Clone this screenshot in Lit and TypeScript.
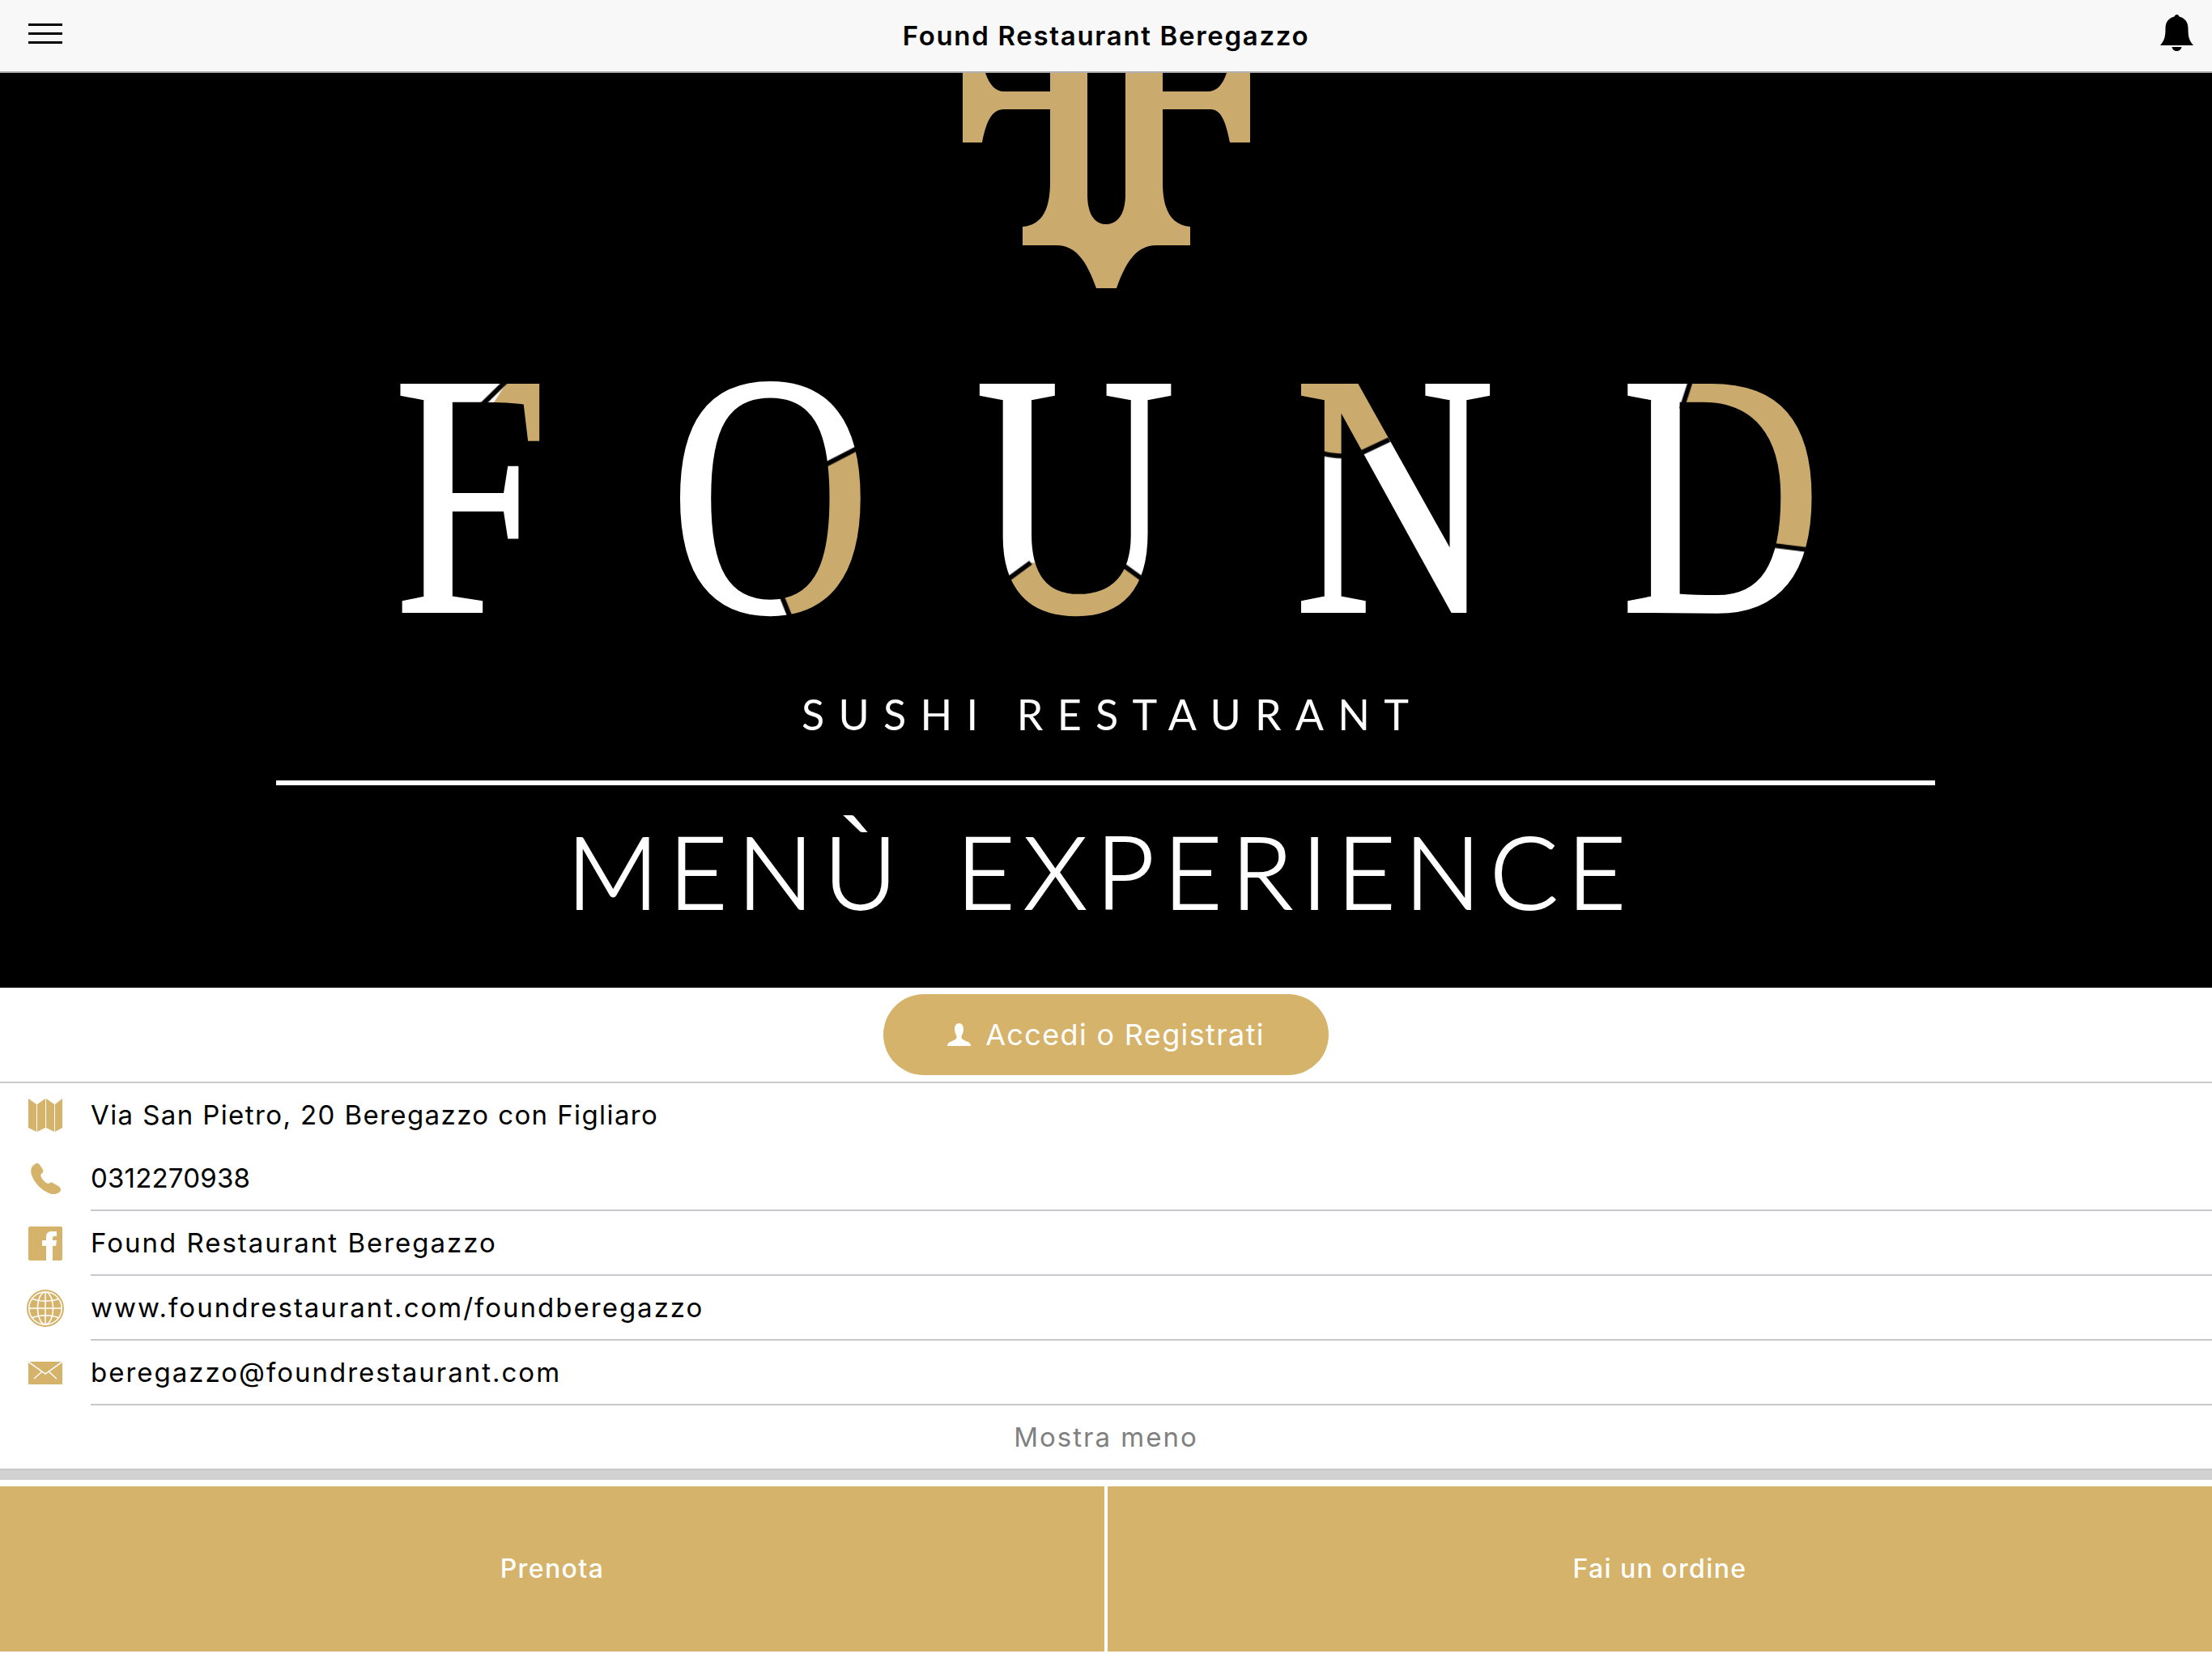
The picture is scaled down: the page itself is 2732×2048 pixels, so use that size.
import { LitElement, html, css } from 'lit';
import { customElement } from 'lit/decorators.js';

const rows = [
  {
    text: 'Via San Pietro, 20 Beregazzo con Figliaro',
    plain: true,
    spacing: 1.4,
    icon: html`<svg class="ic" width="42" height="41" viewBox="0 0 42 41"><path d="M0 0L10 7V41L0 36ZM11 7L21 0V36L11 41ZM22 0L32 7V41L22 36ZM33 7L42 0V36L33 41Z"/></svg>`,
  },
  {
    text: '0312270938',
    spacing: 0.2,
    icon: html`<svg class="ic" width="38" height="38" viewBox="0 0 38 38"><path d="M6 1C9-1 11 0 13 3L16 8C17 10 16 12 14 13C13 14 13 16 15 19C18 23 21 25 23 25C25 24 26 23 28 24L35 28C38 30 39 33 37 35C34 38 29 39 24 37C14 33 5 24 2 14C0 8 2 3 6 1Z"/></svg>`,
  },
  {
    text: 'Found Restaurant Beregazzo',
    spacing: 2,
    icon: html`<svg class="ic" width="42" height="42" viewBox="0 0 42 42"><path d="M2 0H40Q42 0 42 2V40Q42 42 40 42H30V24H34L35 17H30V14Q30 12 32 12H35V6H29Q22 6 22 13V17H17V24H22V42H2Q0 42 0 40V2Q0 0 2 0Z"/></svg>`,
  },
  {
    text: 'www.foundrestaurant.com/foundberegazzo',
    spacing: 2,
    icon: html`<svg width="46" height="46" viewBox="0 0 46 46">
      <circle cx="23" cy="23" r="22" fill="none" stroke="#d6b36a" stroke-width="2"/>
      <circle cx="23" cy="23" r="19.5" fill="#d6b36a"/>
      <g fill="none" stroke="#fff" stroke-width="1.6">
        <ellipse cx="23" cy="23" rx="9.5" ry="20"/>
        <path d="M23 3V43M3 23H43M6.5 11.5Q23 17 39.5 11.5M6.5 34.5Q23 29 39.5 34.5"/>
      </g>
    </svg>`,
  },
  {
    text: 'beregazzo@foundrestaurant.com',
    spacing: 2,
    icon: html`<svg width="42" height="28" viewBox="0 0 42 28">
      <rect width="42" height="28" fill="#d6b36a"/>
      <path d="M0 0L21 15L42 0M7 21L17 12M35 21L25 12" fill="none" stroke="#fff" stroke-width="1.5"/>
    </svg>`,
  },
];

@customElement('app-root')
export class AppRoot extends LitElement {
  static styles = css`
    :host {
      display: block;
      width: 2732px;
      height: 2048px;
      background: #fff;
      font-family: 'Inter', 'Liberation Sans', sans-serif;
      color: #000;
    }
    .bar {
      height: 88px;
      background: #f8f8f8;
      border-bottom: 2px solid #b2b2b2;
      display: grid;
      grid-template-columns: 1fr auto 1fr;
      align-items: center;
      padding: 0 23px;
    }
    .burger {
      display: flex;
      flex-direction: column;
      gap: 8px;
      width: 42px;
      margin: 0 0 6px 12px;
    }
    .burger span {
      height: 3px;
      background: #000;
    }
    .title {
      font-size: 33px;
      font-weight: 600;
      letter-spacing: 1.68px;
    }
    .bell {
      justify-self: end;
      margin-bottom: 7px;
    }
    .hero {
      display: block;
      width: 2732px;
      height: 1130px;
      background: #000;
    }
    .login {
      height: 108px;
      border-bottom: 2px solid #c8c8cc;
      display: flex;
      justify-content: center;
      padding-top: 8px;
    }
    .login button {
      width: 550px;
      height: 100px;
      border: 0;
      border-radius: 50px;
      background: #d6b36a;
      color: #fff;
      font: inherit;
      font-size: 36px;
      letter-spacing: 1.35px;
      display: flex;
      align-items: center;
      justify-content: center;
      gap: 18px;
    }
    .login svg {
      fill: #fff;
    }
    .row {
      display: flex;
    }
    .icon {
      width: 112px;
      flex: none;
      display: flex;
      align-items: center;
      justify-content: center;
    }
    .ic {
      fill: #d6b36a;
    }
    .label {
      flex: 1;
      height: 78px;
      border-bottom: 2px solid #c8c8cc;
      display: flex;
      align-items: center;
      font-size: 33px;
    }
    .row.plain .label {
      border-bottom: 0;
    }
    .more {
      height: 78px;
      display: flex;
      align-items: center;
      justify-content: center;
      font-size: 33px;
      letter-spacing: 2px;
      color: #808080;
    }
    .band {
      height: 12px;
      background: #d2d2d2;
      border-top: 2px solid #c8c8cc;
      margin-bottom: 8px;
    }
    .actions {
      display: grid;
      grid-template-columns: 1fr 1fr;
      gap: 4px;
      height: 204px;
    }
    .actions div {
      background: #d6b36a;
      color: #fff;
      font-size: 32px;
      font-weight: 500;
      letter-spacing: 1.4px;
      padding-bottom: 2px;
      display: flex;
      align-items: center;
      justify-content: center;
    }
  `;

  // FOUND stays real text: the gold pieces and black cuts come from a pattern fill
  private renderHero() {
    return html`<svg class="hero" viewBox="0 90 2732 1130">
      <defs>
        <pattern id="found-fill" patternUnits="userSpaceOnUse" x="0" y="0" width="2732" height="2048" patternTransform="scale(1.2422 1)">
          <rect width="2732" height="2048" fill="#fff"/>
          <g fill="#cbaa6e">
            <path d="M631 465H700V550H575Z"/>
            <path d="M1070 548L1012 578L965 735L979 770H1100V548Z"/>
            <path d="M1228 728L1273 695H1383L1416 719V790H1228Z"/>
            <path d="M1600 465H1680L1716 543L1678 561Q1655 567 1625 558H1600Z"/>
            <path d="M2090 465L2077 505L2185 673L2240 680H2270V465Z"/>
          </g>
          <g fill="none" stroke="#000" stroke-width="6">
            <path d="M631 465L575 520"/>
            <path d="M1070 548L1012 578M965 735L979 770"/>
            <path d="M1228 728L1273 695M1383 695L1416 719"/>
            <path d="M1625 558Q1655 567 1678 561L1716 543"/>
            <path d="M2090 465L2077 505M2185 673L2240 680"/>
          </g>
        </pattern>
      </defs>
      <path fill="#cbaa6e" d="M1189 90V176H1213C1218 150 1225 135 1240 135H1297V225C1297 262 1285 278 1263 280V303H1305C1330 303 1343 325 1354 356H1379C1390 325 1403 303 1428 303H1470V280C1448 278 1436 262 1436 225V135H1495C1508 135 1514 150 1519 176H1544V90H1515C1510 105 1503 113 1491 113H1436V90H1390V240C1390 265 1380 277 1366 277C1352 277 1343 265 1343 240V90H1297V113H1240C1230 113 1222 105 1217 90Z"/>
      <g transform="scale(0.805 1)">
        <text x="604 1028 1496 1986 2487" y="755" font-family="'Liberation Serif', serif" font-size="426" fill="url(#found-fill)" stroke="url(#found-fill)" stroke-width="4">FOUND</text>
      </g>
      <text x="990" y="902" font-family="Lato, sans-serif" font-size="52" fill="#fff" textLength="750" lengthAdjust="spacing">SUSHI RESTAURANT</text>
      <rect x="341" y="964" width="2049" height="6" fill="#fff"/>
      <text y="1123" font-family="Lato, sans-serif" font-weight="300" font-size="125" fill="#fff" stroke="#fff" stroke-width="2"><tspan x="700" textLength="408" lengthAdjust="spacing">MENÙ</tspan> <tspan x="1181" textLength="827" lengthAdjust="spacing">EXPERIENCE</tspan></text>
    </svg>`;
  }

  render() {
    return html`
      <div class="bar">
        <div class="burger"><span></span><span></span><span></span></div>
        <div class="title">Found Restaurant Beregazzo</div>
        <svg class="bell" width="41" height="45" viewBox="0 0 41 45">
          <path d="M20.5 0C22 0 23 1 23.5 2.5C30 4 34.5 9 34.5 17C34.5 27 35.5 32 41 38H0C5.5 32 6.5 27 6.5 17C6.5 9 11 4 17.5 2.5C18 1 19 0 20.5 0ZM14.5 40H26.5C26 43 23.5 45 20.5 45C17.5 45 15 43 14.5 40Z"/>
        </svg>
      </div>
      ${this.renderHero()}
      <div class="login">
        <button>
          <svg width="29" height="28" viewBox="0 0 29 28"><path d="M14.5 0C18.5 0 20 3.5 20 7.5C20 11 18.5 14 17.5 16C17 19 19 20.5 23 22C27 23 29 25 29 28H0C0 25 2 23 6 22C10 20.5 12 19 11.5 16C10.5 14 9 11 9 7.5C9 3.5 10.5 0 14.5 0Z"/></svg>
          Accedi o Registrati
        </button>
      </div>
      ${rows.map(
        (r) => html`<div class="row ${r.plain ? 'plain' : ''}">
          <div class="icon">${r.icon}</div>
          <div class="label" style="letter-spacing: ${r.spacing}px">${r.text}</div>
        </div>`,
      )}
      <div class="more">Mostra meno</div>
      <div class="band"></div>
      <div class="actions">
        <div>Prenota</div>
        <div>Fai un ordine</div>
      </div>
    `;
  }
}
